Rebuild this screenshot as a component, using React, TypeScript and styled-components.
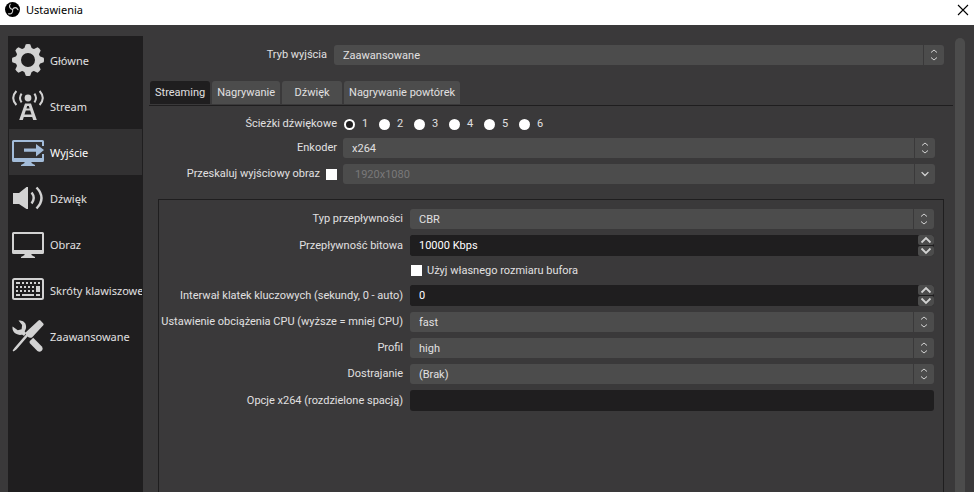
import React, { useId, useState } from 'react';
import styled, { createGlobalStyle } from 'styled-components';

const color = {
  window: '#3a393a',
  dark: '#1f1e1f',
  control: '#4c4c4c',
  selected: '#323132',
  text: '#e1e0e1',
  bright: '#ffffff',
  disabled: '#7a797a',
  icon: '#d2d2d2',
  accent: '#a3bcd9',
};

const font = {
  form: 'Roboto, "Noto Sans", sans-serif',
  shell: '"Noto Sans", "Open Sans", sans-serif',
};

const GlobalStyle = createGlobalStyle`
  *, *::before, *::after { box-sizing: border-box; }
  body {
    margin: 0;
    background: ${color.window};
    color: ${color.text};
    font: 11px/16px ${font.form};
  }
  button, input, select { font: inherit; color: inherit; margin: 0; }
`;

const Window = styled.div`
  display: flex;
  flex-direction: column;
  min-height: 100vh;
`;

const TitleBar = styled.header`
  display: flex;
  align-items: center;
  height: 25px;
  padding: 0 5px 6px;
  gap: 6px;
  background: #fff;
  color: #000;
`;

const Title = styled.h1`
  flex: 1;
  margin: 0;
  font: 400 11px/18px ${font.shell};
`;

const CloseButton = styled.button`
  display: flex;
  padding: 0;
  border: 0;
  background: none;
`;

const Body = styled.div`
  display: flex;
  flex: 1;
  padding: 11px 9px 0 8px;
`;

const Sidebar = styled.nav`
  display: flex;
  flex-direction: column;
  flex: none;
  width: 135px;
  padding: 1px;
  background: ${color.dark};
`;

const NavItem = styled.button<{ $active: boolean }>`
  display: flex;
  align-items: center;
  gap: 6px;
  height: 46px;
  padding: 0 0 0 3px;
  border: 0;
  overflow: hidden;
  white-space: nowrap;
  font: 11px/16px ${font.shell};
  text-align: left;
  background: ${(p) => (p.$active ? color.selected : 'transparent')};
  color: ${(p) => (p.$active ? color.bright : color.text)};
  svg {
    flex: none;
    color: ${(p) => (p.$active ? color.accent : color.icon)};
  }
`;

const NavText = styled.span`
  padding-top: 2px;
`;

const Main = styled.main`
  display: flex;
  flex-direction: column;
  flex: 1;
  min-width: 0;
  padding: 9px 2px 0 6px;
`;

const ScrollTrack = styled.div`
  display: flex;
  flex: none;
  width: 10px;
  padding-top: 2px;
`;

const ScrollThumb = styled.div`
  flex: 1;
  border-radius: 5px 5px 0 0;
  background: ${color.control};
`;

const Form = styled.div<{ $label: number; $gap: number }>`
  display: grid;
  grid-template-columns: ${(p) => p.$label}px minmax(0, 1fr);
  column-gap: ${(p) => p.$gap}px;
  row-gap: 6px;
  align-items: center;
`;

const InsetForm = styled(Form)`
  padding-right: 9px;
`;

const LabelCell = styled.div`
  display: flex;
  align-items: center;
  justify-content: flex-end;
  gap: 6px;
  white-space: nowrap;
`;

const Tabs = styled.div`
  display: flex;
  gap: 2px;
  margin-top: 16px;
  padding: 0 1px 1px;
  border-bottom: 1px solid ${color.dark};
`;

const Tab = styled.button<{ $active: boolean }>`
  height: 23px;
  min-width: 60px;
  padding: 1px 5px 0;
  border: 0;
  border-radius: 3px 3px 0 0;
  white-space: nowrap;
  background: ${(p) => (p.$active ? color.dark : color.control)};
`;

const TabPane = styled.section`
  display: flex;
  flex-direction: column;
  flex: 1;
  padding: 10px 9px 0 0;
`;

const Group = styled.div`
  flex: 1;
  margin: 15px 0 0 9px;
  padding: 9px 9px 0 8px;
  border: 1px solid ${color.dark};
  border-bottom: 0;
`;

const SelectBox = styled.div`
  display: grid;
  grid-template-columns: minmax(0, 1fr) 20px;
  height: 20px;
`;

const NativeSelect = styled.select<{ $inset: number }>`
  grid-area: 1 / 1 / 2 / 3;
  appearance: none;
  width: 100%;
  height: 20px;
  padding: 1px 24px 0 ${(p) => p.$inset}px;
  border: 0;
  border-radius: 3px;
  background: ${color.control};
  &:disabled {
    color: ${color.disabled};
    opacity: 1;
  }
`;

const SelectArrow = styled.span`
  grid-area: 1 / 2;
  z-index: 1;
  display: flex;
  align-items: center;
  justify-content: center;
  margin-left: -1px;
  border-left: 1px solid ${color.window};
  pointer-events: none;
  color: ${color.icon};
`;

const SpinBox = styled.div`
  display: flex;
  height: 21px;
  border-radius: 3px;
  overflow: hidden;
  background: ${color.dark};
`;

const TextField = styled.input`
  flex: 1;
  min-width: 0;
  width: 100%;
  height: 21px;
  padding: 0 9px;
  border: 0;
  border-radius: 3px;
  background: ${color.dark};
  color: ${color.bright};
`;

const SpinButtons = styled.div`
  display: flex;
  flex-direction: column;
  gap: 1px;
  width: 16px;
`;

const SpinButton = styled.button`
  display: flex;
  flex: 1;
  align-items: center;
  justify-content: center;
  padding: 0;
  border: 0;
  border-radius: 2px;
  background: ${color.control};
  color: ${color.icon};
`;

const CheckLine = styled.label`
  display: flex;
  align-items: center;
  gap: 5px;
  height: 17px;
  padding-left: 1px;
`;

const CheckBox = styled.input`
  appearance: none;
  width: 11px;
  height: 11px;
  background: #fff;
  &:checked { border: 3px solid #fff; background: ${color.window}; }
`;

const RadioRow = styled.div`
  display: flex;
  height: 16px;
  padding-left: 1px;
`;

const RadioLabel = styled.label`
  display: flex;
  align-items: center;
  gap: 7px;
  width: 35px;
`;

const Radio = styled.input`
  appearance: none;
  width: 11px;
  height: 11px;
  border-radius: 50%;
  background: #fff;
  &:checked { border: 2px solid #fff; background: ${color.dark}; }
`;

const Logo = () => (
  <svg width="15" height="15" viewBox="0 0 30 30" aria-hidden="true">
    <circle cx="15" cy="15" r="15" fill="#000" />
    <g fill="none" stroke="#d8d8d8" strokeWidth="2.2" strokeLinecap="round">
      <path d="M15 15C10 14 7 9 10.5 4.5" />
      <path d="M15 15C18 10 23 10 26 15.5" />
      <path d="M15 15C17 20 13 25 7 23.5" />
    </g>
  </svg>
);

const Svg = ({ children }: { children: React.ReactNode }) => (
  <svg width="32" height="32" viewBox="0 0 32 32" fill="currentColor" aria-hidden="true">
    {children}
  </svg>
);

const GearIcon = () => (
  <Svg>
    <circle cx="16" cy="16" r="9.7" fill="none" stroke="currentColor" strokeWidth="5.4" />
    {[0, 45, 90, 135, 180, 225, 270, 315].map((a) => (
      <path key={a} transform={`rotate(${a} 16 16)`} d="M12 5L13.8 0.3Q16 -0.3 18.2 0.3L20 5Z" />
    ))}
  </Svg>
);

const TowerIcon = () => (
  <Svg>
    <circle cx="16" cy="8" r="3.4" />
    <g fill="none" stroke="currentColor" strokeWidth="2">
      <path d="M9.6 3.6Q6.4 8 9.6 12.4M22.4 3.6Q25.6 8 22.4 12.4" />
      <path d="M4.4 1Q-2 8 4.4 15M27.6 1Q34 8 27.6 15" />
    </g>
    <path fillRule="evenodd" d="M13 13.5H19L24.8 30H21.2L20.2 27H11.8L10.8 30H7.2ZM15.2 16L14.4 18.6H17.6L16.8 16ZM13.8 20.5L12.5 24.6H19.5L18.2 20.5Z" />
  </Svg>
);

const MonitorIcon = () => (
  <Svg>
    <path fillRule="evenodd" d="M1.5 4H30.5Q32 4 32 5.5V24.5Q32 26 30.5 26H1.5Q0 26 0 24.5V5.5Q0 4 1.5 4ZM2 6V22H30V6Z" />
    <path d="M12.5 26H19.5V27Q21 28 23 29V30H9V29Q11 28 12.5 27Z" />
  </Svg>
);

const OutputIcon = () => (
  <Svg>
    <path d="M1.5 4H30.5Q32 4 32 5.5V10H30V6H2V22H30V18H32V24.5Q32 26 30.5 26H1.5Q0 26 0 24.5V5.5Q0 4 1.5 4Z" />
    <path d="M12.5 26H19.5V27Q21 28 23 29V30H9V29Q11 28 12.5 27Z" />
    <path d="M12 12.5H24V8L32 14L24 20.5V15.8H12Z" />
  </Svg>
);

const SpeakerIcon = () => (
  <Svg>
    <path d="M1 11H7L14.5 5H16V27H14.5L7 22H1Z" />
    <g fill="none" stroke="currentColor" strokeWidth="2.4">
      <path d="M19.6 10.6Q23.8 16 19.6 21.4" />
      <path d="M24.5 5.5Q34.5 16 24.5 26.5" />
    </g>
  </Svg>
);

const KeyboardIcon = () => (
  <Svg>
    <rect x="1" y="5" width="30" height="20" rx="1.5" fill="none" stroke="currentColor" strokeWidth="2" />
    <path d="M4 8h4v2H4zM10 8h2v2h-2zM14 8h2v2h-2zM18 8h2v2h-2zM22 8h2v2h-2zM26 8h2v2h-2zM4 12h2v2H4zM8 12h2v2H8zM12 12h2v2h-2zM16 12h2v2h-2zM20 12h2v2h-2zM24 12h4v6h-4zM4 16h2v2H4zM8 16h2v2H8zM12 16h2v2h-2zM16 16h2v2h-2zM20 16h2v2h-2zM4 20h4v2H4zM10 20h12v2H10zM24 20h4v2h-4z" />
  </Svg>
);

const ToolsIcon = () => (
  <Svg>
    <path d="M26.5 0.5Q27.5 -0.3 28.5 0.6L31.3 3.4Q32 4.2 31.3 5.2L20 17.5Q17.5 18.5 15.6 16.6L4.6 29.2L1.6 31.6L0.6 30.6L2.8 27.4L14 14.5Q13.2 12.8 14.6 11.6Z" />
    <path d="M6.5 0.6Q11 -0.3 13.2 3.2Q14.6 5.8 13.8 9L11.2 14.2Q7.5 15.8 4 13.8Q-0.2 11.2 0.6 6.4L5.8 10.3L9.6 9.3L10.1 5Z" />
    <path d="M11 10L14.3 13L12 16L8.5 13Z" />
    <path d="M17.6 21.2L21.2 17.8L29.9 26.4Q31.5 29 29.7 30.8Q27.6 32.6 25.4 31L17.6 23Z" />
  </Svg>
);

const Updown = () => (
  <svg width="8" height="14" viewBox="0 0 8 14" fill="none" stroke="currentColor" aria-hidden="true">
    <path d="M1 4.5L4 2L7 4.5M1 9.5L4 12L7 9.5" />
  </svg>
);

const Chevron = ({ up = false, wide = false }: { up?: boolean; wide?: boolean }) => (
  <svg width={wide ? 12 : 10} height={wide ? 8 : 6} viewBox="0 0 12 8" fill="none" stroke="currentColor" strokeWidth="1.8" aria-hidden="true">
    <path d={up ? 'M1.5 6.5L6 2L10.5 6.5' : 'M1.5 1.5L6 6L10.5 1.5'} />
  </svg>
);

const navigation = [
  { name: 'Główne', Icon: GearIcon },
  { name: 'Stream', Icon: TowerIcon },
  { name: 'Wyjście', Icon: OutputIcon },
  { name: 'Dźwięk', Icon: SpeakerIcon },
  { name: 'Obraz', Icon: MonitorIcon },
  { name: 'Skróty klawiszowe', Icon: KeyboardIcon },
  { name: 'Zaawansowane', Icon: ToolsIcon },
];

const tabs = ['Streaming', 'Nagrywanie', 'Dźwięk', 'Nagrywanie powtórek'];

type SelectProps = { id: string; value: string; disabled?: boolean; label?: string };

const Select = ({ id, value, disabled = false, label }: SelectProps) => (
  <SelectBox>
    <NativeSelect id={id} disabled={disabled} aria-label={label} $inset={disabled ? 12 : 9}>
      <option>{value}</option>
    </NativeSelect>
    <SelectArrow>{disabled ? <Chevron /> : <Updown />}</SelectArrow>
  </SelectBox>
);

const SelectRow = ({ label, value }: { label: string; value: string }) => {
  const id = useId();
  return (
    <>
      <LabelCell><label htmlFor={id}>{label}</label></LabelCell>
      <Select id={id} value={value} />
    </>
  );
};

const SpinRow = ({ label, start, step, unit = '' }: { label: string; start: number; step: number; unit?: string }) => {
  const id = useId();
  const [value, setValue] = useState(start);
  return (
    <>
      <LabelCell><label htmlFor={id}>{label}</label></LabelCell>
      <SpinBox>
        <TextField
          id={id}
          value={`${value}${unit}`}
          onChange={(e) => setValue(parseInt(e.target.value, 10) || 0)}
        />
        <SpinButtons>
          <SpinButton type="button" aria-label="Zwiększ" onClick={() => setValue(value + step)}><Chevron up wide /></SpinButton>
          <SpinButton type="button" aria-label="Zmniejsz" onClick={() => setValue(Math.max(0, value - step))}><Chevron wide /></SpinButton>
        </SpinButtons>
      </SpinBox>
    </>
  );
};

export default function App() {
  const [page, setPage] = useState('Wyjście');
  const [tab, setTab] = useState('Streaming');
  const [track, setTrack] = useState(1);

  return (
    <Window>
      <GlobalStyle />
      <TitleBar>
        <Logo />
        <Title>Ustawienia</Title>
        <CloseButton type="button" aria-label="Zamknij">
          <svg width="12" height="12" viewBox="0 0 12 12" stroke="#000" strokeWidth="1.1">
            <path d="M1 1L11 11M11 1L1 11" />
          </svg>
        </CloseButton>
      </TitleBar>
      <Body>
        <Sidebar>
          {navigation.map(({ name, Icon }) => (
            <NavItem key={name} type="button" $active={page === name} onClick={() => setPage(name)}>
              <Icon />
              <NavText>{name}</NavText>
            </NavItem>
          ))}
        </Sidebar>
        <Main>
          <InsetForm $label={178} $gap={7}>
            <SelectRow label="Tryb wyjścia" value="Zaawansowane" />
          </InsetForm>
          <Tabs role="tablist">
            {tabs.map((name) => (
              <Tab key={name} type="button" role="tab" aria-selected={tab === name} $active={tab === name} onClick={() => setTab(name)}>
                {name}
              </Tab>
            ))}
          </Tabs>
          <TabPane>
            <InsetForm $label={188} $gap={6}>
              <LabelCell id="tracks">Ścieżki dźwiękowe</LabelCell>
              <RadioRow role="radiogroup" aria-labelledby="tracks">
                {[1, 2, 3, 4, 5, 6].map((n) => (
                  <RadioLabel key={n}>
                    <Radio type="radio" name="track" checked={track === n} onChange={() => setTrack(n)} />
                    {n}
                  </RadioLabel>
                ))}
              </RadioRow>
              <SelectRow label="Enkoder" value="x264" />
              <LabelCell>
                <label htmlFor="rescale">Przeskaluj wyjściowy obraz</label>
                <CheckBox id="rescale" type="checkbox" />
              </LabelCell>
              <Select id="resolution" value="1920x1080" label="Rozdzielczość" disabled />
            </InsetForm>
            <Group>
              <Form $label={236} $gap={7}>
                <SelectRow label="Typ przepływności" value="CBR" />
                <SpinRow label="Przepływność bitowa" start={10000} step={50} unit=" Kbps" />
                <span />
                <CheckLine>
                  <CheckBox type="checkbox" />
                  Użyj własnego rozmiaru bufora
                </CheckLine>
                <SpinRow label="Interwał klatek kluczowych (sekundy, 0 - auto)" start={0} step={1} />
                <SelectRow label="Ustawienie obciążenia CPU (wyższe = mniej CPU)" value="fast" />
                <SelectRow label="Profil" value="high" />
                <SelectRow label="Dostrajanie" value="(Brak)" />
                <LabelCell><label htmlFor="options">Opcje x264 (rozdzielone spacją)</label></LabelCell>
                <TextField id="options" type="text" />
              </Form>
            </Group>
          </TabPane>
        </Main>
        <ScrollTrack><ScrollThumb /></ScrollTrack>
      </Body>
    </Window>
  );
}
